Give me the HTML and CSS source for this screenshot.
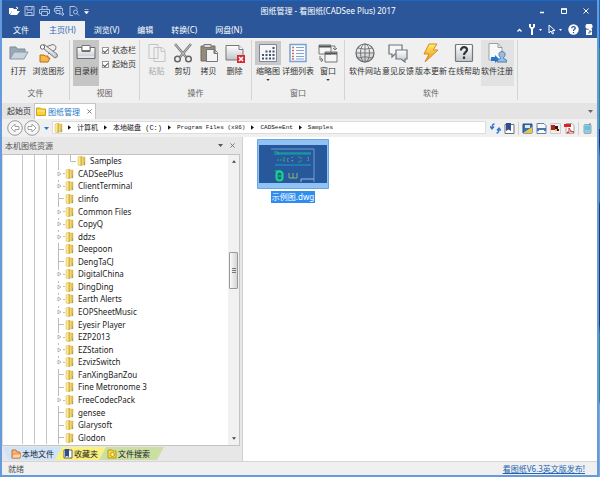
FILE: index.html
```html
<!DOCTYPE html>
<html lang="zh-CN">
<head>
<meta charset="utf-8">
<title>图纸管理 - 看图纸(CADSee Plus) 2017</title>
<link rel="stylesheet" href="styles.css">
</head>
<body>
<svg class="sprite" aria-hidden="true">
  <defs>
    <linearGradient id="metal" x2="0" y2="1"><stop stop-color="#fff"/><stop offset="1" stop-color="#bfc4cb"/></linearGradient>
    <linearGradient id="gold" x2="1" y2="0"><stop stop-color="#f9eeab"/><stop offset="1" stop-color="#dcae35"/></linearGradient>
    <linearGradient id="bolt" x2="0" y2="1"><stop stop-color="#fff06a"/><stop offset="1" stop-color="#f28a10"/></linearGradient>
  </defs>
  <symbol id="folder" viewBox="0 0 9 10"><path d="M1 1l3-1v10l-3-1z" fill="#fae78f" stroke="#d9b84d" stroke-width=".5"/><path d="M4 1h4v8H4z" fill="url(#gold)" stroke="#d8b64c" stroke-width=".5"/><path d="M4.400 0v10" stroke="#c89b2e" stroke-width=".7"/><path d="M7 6h1v3H7z" fill="#87ad8b"/></symbol>
  <symbol id="expand" viewBox="0 0 5 6"><path d="M1 1l3 2-3 2z" fill="#fff" stroke="#999" stroke-width=".7"/></symbol>
  <symbol id="down" viewBox="0 0 5 3"><path d="M0 0h5L2.500 3z" fill="currentColor"/></symbol>
  <symbol id="right" viewBox="0 0 4 6"><path d="M0 0l4 3-4 3z" fill="#111"/></symbol>
  <symbol id="close" viewBox="0 0 6 6"><path d="M.5.5l5 5m0-5l-5 5" fill="none" stroke="currentColor"/></symbol>
</svg>
<div class="window">
  <header class="titlebar">
    <div class="quick">
      <button aria-label="打开"><svg viewBox="0 0 11 10"><path d="M0 2h4l1 1h3v2H3L1 8H0z" fill="#fff"/><path d="M3 5h8L8 9H1z" fill="#fff"/><path d="M7 1l2 1-1 1" fill="none" stroke="#fff"/></svg></button>
      <button aria-label="保存"><svg viewBox="0 0 11 10"><path d="M1 .5h9v9H1zM3 .5V4h5V.5M3 9.500V6.500h5v3" fill="none" stroke="#a9c0e2"/></svg></button>
      <button aria-label="打印"><svg viewBox="0 0 11 10"><path d="M3 3V.5h5V3M2.500 7.500h-2v-4h10v4h-2M2.500 5.500h6v4h-6z" fill="none" stroke="#a9c0e2"/></svg></button>
      <button aria-label="批量打印"><svg viewBox="0 0 11 10"><path d="M2 2V.5h5V2M1.500 5.500h-1v-3h8v3M2 4.500h4v3H2zM5 8h5M8 6l2 2-2 2" fill="none" stroke="#a9c0e2"/></svg></button>
      <button aria-label="打印预览"><svg viewBox="0 0 11 10"><path d="M4 9.500H1v-9h5l2 2v1" fill="none" stroke="#a9c0e2"/><circle cx="6.500" cy="6" r="2" fill="none" stroke="#a9c0e2"/><path d="M8 7.500L10 9.500" stroke="#a9c0e2"/></svg></button>
      <button class="more" aria-label="更多"><svg viewBox="0 0 5 5"><path d="M.5.5h4M.5 2.500h4L2.500 5z" fill="#fff" stroke="#fff" stroke-width=".5"/></svg></button>
    </div>
    <h1>图纸管理 - 看图纸(CADSee Plus) 2017</h1>
    <div class="sys">
      <button aria-label="最小化"><svg viewBox="0 0 6 6"><path d="M1 4.500h4" stroke="#fff" stroke-width="1.500"/></svg></button>
      <button aria-label="最大化"><svg viewBox="0 0 6 6"><path d="M.5 1h5v4.500h-5z" fill="none" stroke="#fff"/><path d="M0 1h6" stroke="#fff" stroke-width="1.500"/></svg></button>
      <button aria-label="关闭"><svg><use href="#close"/></svg></button>
    </div>
  </header>
  <nav class="menu">
    <button>文件</button><button class="current">主页(H)</button><button>浏览(V)</button><button>编辑</button><button>转换(C)</button><button>网盘(N)</button>
    <div class="tools">
      <button aria-label="折叠"><svg class="w5" viewBox="0 0 5 4"><path d="M.5 3.500l2-2 2 2" fill="none" stroke="#fff" stroke-width="1.300"/></svg></button>
      <button class="pair" aria-label="设置"><svg class="w8" viewBox="0 0 8 11"><path d="M1 0v3l2 2v6h2V5l2-2V0H5v3H3V0z" fill="#fff"/></svg><svg class="w3"><use href="#down"/></svg></button>
      <button class="pair" aria-label="选择"><svg class="w8" viewBox="0 0 8 11"><path d="M1 1v8l2-2 1.500 3 1-.5L4.500 6.500H7z" fill="none" stroke="#fff"/></svg><svg class="w3"><use href="#down"/></svg></button>
      <button aria-label="帮助"><svg class="w11" viewBox="0 0 11 11"><circle cx="5.500" cy="5.500" r="5.200" fill="#fff"/><path d="M3.700 4.300c0-2.500 3.800-2.200 3.500 0C7 5.500 5.500 5.300 5.500 7M5.500 8v1.200" fill="none" stroke="#2b579a" stroke-width="1.300"/></svg></button>
      <button aria-label="账户"><svg class="w8" viewBox="0 0 8 11"><path d="M1.500 0h5l1 1.500v2L6 5h1v6H1V5h1L.5 3.500v-2z" fill="#fff"/><path d="M1 5.300h3M4 7h2v1H4v2" fill="none" stroke="#2b579a" stroke-width=".8"/></svg></button>
    </div>
  </nav>
  <section class="ribbon">
    <div class="group g-file">
      <div class="items">
        <button class="cmd"><svg viewBox="0 0 20 20"><path d="M1 4h6l1 2h8v4H6l-5 6z" fill="#9aa8b7" stroke="#7d8b9b"/><path d="M5 9h14l-4 7H1z" fill="#c8d3de" stroke="#8998a8"/></svg>打开</button>
        <button class="cmd"><svg viewBox="0 0 20 20"><path d="M3 5l11-3.500q4 1 2.500 5L9 11" fill="#eee" stroke="#777"/><path d="M2 3.500l3-2L18 11q2 3-2 4z" fill="url(#metal)" stroke="#777"/><circle cx="3.500" cy="4" r="2.200" fill="#fff" stroke="#666"/><path d="M1 12h4l1 1h3v2h2l-2 4H1z" fill="#f8b74d" stroke="#b66f12"/></svg>浏览图形</button>
      </div>
      <h2>文件</h2>
    </div>
    <div class="group g-view">
      <div class="items">
        <button class="cmd pressed"><svg viewBox="0 0 20 20"><path d="M1 4.500h5v4h8v-4h5v11H1z" fill="url(#metal)" stroke="#6d6d6d"/><path d="M6 2.500h8v5H6z" fill="#fff" stroke="#777"/><path d="M2 14h16" stroke="#fff"/></svg>目录树</button>
        <div class="checks"><label><input type="checkbox" checked>状态栏</label><label><input type="checkbox" checked>起始页</label></div>
      </div>
      <h2>视图</h2>
    </div>
    <div class="group g-edit">
      <div class="items">
        <button class="cmd" disabled><svg viewBox="0 0 20 20"><path d="M2 1.500h9v14H2zM7 4.500h8l3 3V18.500H7zM14 4.500v4h4" fill="#f1f1f1" stroke="#c3c3c3"/></svg>粘贴</button>
        <button class="cmd"><svg viewBox="0 0 20 20"><path d="M2 1l11 13M18 1L7 14" stroke="#777" stroke-width="2.500"/><path d="M2 1l11 13M18 1L7 14" stroke="#ddd" stroke-width=".8"/><circle cx="4.500" cy="16" r="2.800" fill="none" stroke="#666" stroke-width="1.500"/><circle cx="15.500" cy="16" r="2.800" fill="none" stroke="#666" stroke-width="1.500"/></svg>剪切</button>
        <button class="cmd"><svg viewBox="0 0 20 20"><path d="M2 3h14v15H2z" fill="#948b7b" stroke="#756b5c"/><path d="M5 1.500h7v3H5z" fill="#ddd" stroke="#777"/><path d="M7.500 6.500h8l3 3v9h-11zM15 6.500v4h3.500" fill="#f4f4f4" stroke="#777"/></svg>拷贝</button>
        <button class="cmd"><svg viewBox="0 0 20 20"><path d="M1 2.500h13l4 4V17H1z" fill="url(#metal)" stroke="#777"/><path d="M14 2.500v4h4" fill="#fff" stroke="#777"/><path d="M12 12h8v8h-8z" fill="#d62b32"/><path d="M14 14l4 4m0-4l-4 4" stroke="#fff" stroke-width="1.500"/></svg>删除</button>
      </div>
      <h2>操作</h2>
    </div>
    <div class="group g-win">
      <div class="items">
        <button class="cmd thumbs"><svg viewBox="0 0 20 20"><path d="M1.500 1.500h17v17h-17z" fill="#f5f7fa" stroke="#7e8996"/><g fill="none" stroke="#465366" stroke-width="2" stroke-dasharray="2 1.500"><path d="M14.500 5h2M7.500 8.500h9M4 12h13M4 15.500h13"/></g></svg>缩略图<svg class="caret"><use href="#down"/></svg></button>
        <button class="cmd"><svg viewBox="0 0 20 20"><path d="M2 1.500h16v17H2z" fill="#f7fbff" stroke="#7ba1cf" stroke-width="1.500"/><path d="M8 4.500h8M8 7.500h8M8 10.500h8M8 13.500h8M8 16h8" stroke="#86a5c8"/><path d="M4 4.500h2M4 7.500h2M4 10.500h2M4 13.500h2M4 16h2" stroke="#cf6f57" stroke-width="1.500"/></svg>详细列表</button>
        <button class="cmd"><svg viewBox="0 0 20 20"><path d="M1 2h12v9H1zM7 9h12v10H7z" fill="#f5f5f5" stroke="#777"/><path d="M1 3.500h12M7 10.500h12" stroke="#555" stroke-width="2"/><path d="M14 3h3v4m-2-2l2 2 2-2M2 13v4h3m-2-2l2 2-2 2" fill="none" stroke="#777"/></svg>窗口<svg class="caret"><use href="#down"/></svg></button>
      </div>
      <h2>窗口</h2>
    </div>
    <div class="group g-soft">
      <div class="items">
        <button class="cmd"><svg viewBox="0 0 20 20"><circle cx="10" cy="10" r="9" fill="url(#metal)" stroke="#666" stroke-width="1.200"/><ellipse cx="10" cy="10" rx="4.500" ry="9" fill="none" stroke="#777"/><path d="M10 1v18M1 10h18M3 5q7 2.500 14 0M3 15q7-2.500 14 0" fill="none" stroke="#777"/></svg>软件网站</button>
        <button class="cmd"><svg viewBox="0 0 20 20"><path d="M1 2h13v9H7l-3 3v-3H1z" fill="#f6f6f6" stroke="#6d747d" stroke-width="1.200"/><path d="M8 7h11v9h-2v3l-4-3H8z" fill="url(#metal)" stroke="#6d747d" stroke-width="1.200"/></svg>意见反馈</button>
        <button class="cmd"><svg viewBox="0 0 20 20"><path d="M8 1h8l-4 6h5L4 19l4-8H3z" fill="url(#bolt)" stroke="#d78a20"/></svg>版本更新</button>
        <button class="cmd"><svg viewBox="0 0 20 20"><rect x="1.500" y="1.500" width="17" height="17" rx="1" fill="url(#metal)" stroke="#777" stroke-width="1.200"/><path d="M7 7.500c0-5 6.500-4 6-.5-.3 2-3 2.500-3 5M10 13.500v2.500" fill="none" stroke="#333" stroke-width="2.200"/></svg>在线帮助</button>
        <button class="cmd register"><svg viewBox="0 0 20 20"><path d="M2 .5h9l4 4V17H2z" fill="#f8f8f8" stroke="#a1a1a1"/><path d="M11 .5v4h4" fill="none" stroke="#999"/><path d="M10 19q0-3 3.500-3.500v-1q-2-1.500-1.500-4 1-2 3-2t3 2q.5 2.500-1.500 4v1Q20 16 20 19z" fill="#9abce2" stroke="#517dad"/><path d="M4 14h4v-2l4 4-4 4v-2H4z" fill="#2679c8"/></svg>软件注册</button>
      </div>
      <h2>软件</h2>
    </div>
  </section>
  <div class="doctabs">
    <button class="tab">起始页</button>
    <button class="tab active"><svg class="docicon" viewBox="0 0 10 9"><path d="M.5 1h4l1 1h4v6.500h-9z" fill="#f9d13d" stroke="#d49d17"/><path d="M1 4h8" stroke="#fff1a1"/></svg>图纸管理<svg class="x"><use href="#close"/></svg></button>
    <button class="list" aria-label="标签列表"><svg><use href="#down"/></svg></button>
  </div>
  <div class="address">
    <button aria-label="后退"><svg class="nav" viewBox="0 0 16 16"><circle cx="8" cy="8" r="7.300" fill="#f6f6f6" stroke="#999"/><path d="M8 4L4 8l4 4V9.500h4v-3H8z" fill="#fff" stroke="#a2a2a2"/></svg></button>
    <button aria-label="前进"><svg class="nav" viewBox="0 0 16 16"><circle cx="8" cy="8" r="7.300" fill="#f6f6f6" stroke="#999"/><path d="M8 4l4 4-4 4V9.500H4v-3h4z" fill="#fff" stroke="#a2a2a2"/></svg></button>
    <button class="history" aria-label="历史"><svg><use href="#down"/></svg></button>
    <div class="path">
      <svg class="folder"><use href="#folder"/></svg>
      <svg class="sep"><use href="#right"/></svg><button>计算机</button>
      <svg class="sep"><use href="#right"/></svg><button>本地磁盘 (C:)</button>
      <svg class="sep"><use href="#right"/></svg><button>Program Files (x86)</button>
      <svg class="sep"><use href="#right"/></svg><button>CADSeeEnt</button>
      <svg class="sep"><use href="#right"/></svg><button>Samples</button>
    </div>
    <div class="actions">
      <button aria-label="刷新"><svg viewBox="0 0 11 11"><path d="M4.500 1Q2 1 2 5M0 3.500L2 6l2-2.500M6.500 10Q9 10 9 6M7 7.500L9 5l2 2.500" fill="none" stroke="#2e79ca" stroke-width="1.400"/></svg></button>
      <button aria-label="收藏"><svg viewBox="0 0 11 11"><path d="M1 1.500h9v9H1z" fill="#fff" stroke="#6d7078"/><path d="M2 0h5v8L4.500 6.500 2 8z" fill="#314f8c"/></svg></button>
      <i></i>
      <button aria-label="图像"><svg viewBox="0 0 11 11"><path d="M1 1h9v9H1z" fill="#346fb8" stroke="#254f87"/><path d="M1 10l9-6v6z" fill="#f2c63b"/><path d="M3 2h5v3H3z" fill="#dce8f5"/></svg></button>
      <button aria-label="打印"><svg viewBox="0 0 11 11"><path d="M1 .5h7l2 2v8H1z" fill="#f4f9ff" stroke="#68829f"/><path d="M1 5h9v3H1z" fill="#4f76a2"/><path d="M3 7h5v3H3z" fill="#fff"/></svg></button>
      <button aria-label="转换"><svg viewBox="0 0 11 11"><path d="M.5.5h10v10H.5z" fill="#eee" stroke="#ccc"/><path d="M1 2h4v5H1z" fill="#ad2520"/><path d="M5 3h3v4H5z" fill="#41130f"/><path d="M5 6h4v2H5z" fill="#f4b728"/><path d="M7 6h2v2H7z" fill="#41130f"/></svg></button>
      <button aria-label="导出 PDF"><svg viewBox="0 0 11 11"><path d="M2 .5h6l2 2v8H2z" fill="#fff" stroke="#aaa"/><path d="M0 1h7v3H0z" fill="#d9251d"/><path d="M3 10q3-3 2-5 1 4 5 4-4-1-7 1" fill="none" stroke="#d43737"/></svg></button>
      <i></i>
      <button aria-label="手机"><svg viewBox="0 0 11 11"><rect x="2" y="1.500" width="7" height="9" rx="1" fill="#a6c3cf" stroke="#8fabb6"/><path d="M3 3h5v4H3z" fill="#52c8eb"/><path d="M8 0v2" stroke="#777"/></svg></button>
    </div>
  </div>
  <main>
    <aside>
      <div class="panelhead"><h2>本机图纸资源</h2><button aria-label="菜单"><svg><use href="#down"/></svg></button><button aria-label="关闭面板"><svg class="x"><use href="#close"/></svg></button></div>
      <div class="treebox">
        <ul class="tree">
          <li><b></b><b></b><b></b><b></b><b class="leaf end"></b><svg class="folder"><use href="#folder"/></svg>Samples</li>
          <li><b></b><b></b><b></b><b class="open"><svg><use href="#expand"/></svg></b><svg class="folder"><use href="#folder"/></svg>CADSeePlus</li>
          <li><b></b><b></b><b></b><b class="open"><svg><use href="#expand"/></svg></b><svg class="folder"><use href="#folder"/></svg>ClientTerminal</li>
          <li><b></b><b></b><b></b><b class="leaf"></b><svg class="folder"><use href="#folder"/></svg>clinfo</li>
          <li><b></b><b></b><b></b><b class="open"><svg><use href="#expand"/></svg></b><svg class="folder"><use href="#folder"/></svg>Common Files</li>
          <li><b></b><b></b><b></b><b class="open"><svg><use href="#expand"/></svg></b><svg class="folder"><use href="#folder"/></svg>CopyQ</li>
          <li><b></b><b></b><b></b><b class="open"><svg><use href="#expand"/></svg></b><svg class="folder"><use href="#folder"/></svg>ddzs</li>
          <li><b></b><b></b><b></b><b class="leaf"></b><svg class="folder"><use href="#folder"/></svg>Deepoon</li>
          <li><b></b><b></b><b></b><b class="leaf"></b><svg class="folder"><use href="#folder"/></svg>DengTaCJ</li>
          <li><b></b><b></b><b></b><b class="open"><svg><use href="#expand"/></svg></b><svg class="folder"><use href="#folder"/></svg>DigitalChina</li>
          <li><b></b><b></b><b></b><b class="open"><svg><use href="#expand"/></svg></b><svg class="folder"><use href="#folder"/></svg>DingDing</li>
          <li><b></b><b></b><b></b><b class="open"><svg><use href="#expand"/></svg></b><svg class="folder"><use href="#folder"/></svg>Earth Alerts</li>
          <li><b></b><b></b><b></b><b class="open"><svg><use href="#expand"/></svg></b><svg class="folder"><use href="#folder"/></svg>EOPSheetMusic</li>
          <li><b></b><b></b><b></b><b class="leaf"></b><svg class="folder"><use href="#folder"/></svg>Eyesir Player</li>
          <li><b></b><b></b><b></b><b class="open"><svg><use href="#expand"/></svg></b><svg class="folder"><use href="#folder"/></svg>EZP2013</li>
          <li><b></b><b></b><b></b><b class="open"><svg><use href="#expand"/></svg></b><svg class="folder"><use href="#folder"/></svg>EZStation</li>
          <li><b></b><b></b><b></b><b class="open"><svg><use href="#expand"/></svg></b><svg class="folder"><use href="#folder"/></svg>EzvizSwitch</li>
          <li><b></b><b></b><b></b><b class="leaf"></b><svg class="folder"><use href="#folder"/></svg>FanXingBanZou</li>
          <li><b></b><b></b><b></b><b class="leaf"></b><svg class="folder"><use href="#folder"/></svg>Fine Metronome 3</li>
          <li><b></b><b></b><b></b><b class="open"><svg><use href="#expand"/></svg></b><svg class="folder"><use href="#folder"/></svg>FreeCodecPack</li>
          <li><b></b><b></b><b></b><b class="leaf"></b><svg class="folder"><use href="#folder"/></svg>gensee</li>
          <li><b></b><b></b><b></b><b class="leaf"></b><svg class="folder"><use href="#folder"/></svg>Glarysoft</li>
          <li><b></b><b></b><b></b><b class="leaf"></b><svg class="folder"><use href="#folder"/></svg>Glodon</li>
        </ul>
        <div class="scroll"><svg class="up"><use href="#down"/></svg><span class="before"></span><span class="thumb"></span><span class="after"></span><svg><use href="#down"/></svg></div>
      </div>
      <div class="sidetabs">
        <button class="local"><svg viewBox="0 0 10 10"><path d="M1 1h4l1 2h3v6H1z" fill="#f6b774" stroke="#d1712b"/><path d="M2 5h8L9 9H1z" fill="#ffd5a5" stroke="#d1712b" stroke-width=".6"/></svg>本地文件</button>
        <button class="fav"><svg viewBox="0 0 10 10"><path d="M1 1h8v8H1z" fill="#fff" stroke="#5e6270"/><path d="M2 0h4v8L4 7 2 8z" fill="#314f8c"/></svg>收藏夹</button>
        <button class="find"><svg viewBox="0 0 10 10"><path d="M1 1h4l1 1h3v7H1z" fill="#f4dc43" stroke="#b99719"/><circle cx="5.500" cy="5.500" r="2" fill="#fff1a0" stroke="#b99719"/></svg>文件搜索</button>
      </div>
    </aside>
    <section class="files">
      <figure>
        <svg class="preview" viewBox="0 0 72 50"><path d="M.5.5h71v49H.5z" fill="#91c2f4" stroke="#69a6e3"/><path d="M2 6h68v38H2z" fill="#28589c"/><path d="M14 10h43v33" fill="none" stroke="#6f9bd0"/><path d="M44 43v-3h13" fill="none" stroke="#8ebae9"/><g fill="none"><path d="M17 13h4v3M20 14h34" stroke="#18ba70"/><path d="M17 15h37M18 26h36" stroke="#169cce" stroke-width="1.200"/><path d="M20 21h8M27 18v6M41 18h3v5h-3" stroke="#28a673" stroke-dasharray="2 1"/><path d="M31 19v5M35 18v6M51 18v6" stroke="#50c2b3" stroke-dasharray="1 2"/><rect x="19.500" y="32.500" width="6" height="9" rx="3" stroke="#10dc84" stroke-width="2"/><path d="M18 32h6M21 37h4" stroke="#10dc84"/><path d="M32 34v5h4v-5M36 39h4v-5" stroke="#8ab677"/></g><path d="M30 21h1M35 22h1M51 20h1" stroke="#df7969"/></svg>
        <figcaption>示例图.dwg</figcaption>
      </figure>
    </section>
  </main>
  <footer><span>就绪</span><a href="#">看图纸V6.3英文版发布!</a></footer>
</div>
</body>
</html>
```
FILE: styles.css
```css
* { box-sizing: border-box; }
html { height: 100%; background: linear-gradient(#1769c5 0 10%, #28858c 10% 27%, #12306c 27% 30%, #4477b4 33% 42%, #123a78 43% 68%, #28858c 70% 84%, #7fa9da 85%); }
body { height: 100%; margin: 0; padding-right: 1px; font: 8px/12px "Noto Sans", "Noto Sans CJK SC", sans-serif; color: #333; }
button { font: inherit; color: inherit; background: none; border: 0; padding: 0; display: flex; align-items: center; justify-content: center; white-space: nowrap; }
h1, h2, figure, ul { margin: 0; padding: 0; font-size: inherit; font-weight: 400; }
svg { display: block; flex: none; }
.sprite { position: absolute; width: 0; height: 0; }
.window { height: 100%; display: flex; flex-direction: column; background: #f0f0f0; border: solid #659bdd; border-width: 0 2px 2px 2px; }
.titlebar, .menu { background: #2b579a; color: #fff; flex: none; display: flex; }
.titlebar { height: 21px; align-items: center; border-top: 1px solid #1768c4; display: grid; grid-template-columns: 1fr auto 1fr; }
.titlebar h1 { padding-left: 57px; }
.quick { display: flex; gap: 4px; padding-left: 7px; align-items: center; }
.quick svg { width: 11px; height: 10px; }
.quick .more svg { width: 5px; height: 5px; }
.sys { display: flex; justify-content: flex-end; gap: 16px; padding-right: 8px; }
.sys svg { width: 6px; height: 6px; }
.menu { height: 17px; }
.menu > button { padding: 0 9px; }
.menu > button:first-child { padding: 0 11px; }
.menu > .current { background: #f0f0f0; color: #2b69b8; }
.tools { margin-left: auto; display: flex; align-items: center; gap: 6px; padding-right: 4px; }
.tools .pair { gap: 3px; }
.w3 { width: 3px; height: 2px; }
.w5 { width: 5px; height: 4px; }
.w8 { width: 8px; height: 11px; }
.w11 { width: 11px; height: 11px; }

.ribbon { flex: none; height: 65px; display: flex; padding: 2px 0 3px; }
.group { display: flex; flex-direction: column; border-right: 1px solid #d4d4d4; }
.group h2 { text-align: center; color: #666; }
.items { display: flex; height: 47px; justify-content: center; }
.g-file { width: 68px; }
.g-view { width: 70px; }
.g-edit { width: 112px; }
.g-win { width: 93px; }
.g-soft { width: 173px; }
.cmd { flex-direction: column; justify-content: flex-start; min-width: 26px; height: 46px; padding-top: 3px; }
.cmd > svg { width: 20px; height: 20px; margin-bottom: 2px; }
.cmd > .caret { width: 4px; height: 2px; margin-top: 2px; }
.g-file .cmd:last-child { width: 34px; }
.g-win .cmd { width: 30px; }
.g-soft .cmd { width: 33px; }
.cmd:disabled { color: #aaa; }
.pressed { background: #c5c5c5; }
.register { background: #e2e2e2; }
.thumbs > svg:first-child { background: #c8c8c8; width: 26px; height: 24px; padding: 2px 3px; margin: -2px 0 0; }
.checks { padding: 3px 0 0 3px; }
.checks label { display: flex; align-items: center; gap: 3px; height: 14px; white-space: nowrap; }
input { appearance: none; width: 7px; height: 7px; margin: 0; border: 1px solid #999; background: #fff; display: grid; place-items: center; }
input:checked::after { content: ""; width: 4px; height: 2px; border: solid #555; border-width: 0 0 1px 1px; transform: rotate(-45deg); }

.doctabs { flex: none; height: 16px; display: flex; background: #e4e4e4; align-items: stretch; padding-left: 1px; }
.tab { padding: 0 3px 0 4px; }
.tab.active { background: #fff; border: 1px solid #c5c5c5; border-bottom: 0; color: #2878c8; gap: 2px; padding: 0 3px 0 1px; }
.docicon { width: 10px; height: 9px; }
.x { width: 5px; height: 5px; color: #666; }
.tab .x { margin: 0 0 0 5px; }
.list { margin-left: auto; padding-right: 4px; color: #666; }
.list svg { width: 5px; height: 3px; }
.address { flex: none; height: 18px; display: flex; align-items: center; gap: 1px; padding-left: 5px; }
.nav { width: 16px; height: 16px; }
.history { width: 10px; color: #2878c8; }
.history svg { width: 5px; height: 3px; }
.path { flex: 1; align-self: stretch; margin: 2px 0 3px; background: #fff; border: 1px solid #ddd; display: flex; align-items: center; font: 6px/12px "Liberation Mono", monospace; color: #111; }
.path button { margin: 0 6px; }
.path button:nth-of-type(-n+2) { font: 7px/12px "Liberation Mono", "Noto Sans CJK SC", monospace; }
.folder { width: 9px; height: 10px; }
.path .folder { margin: 0 5px 0 1px; }
.sep { width: 3px; height: 5px; }
.actions { display: flex; align-items: center; gap: 3px; padding: 0 4px 0 3px; }
.actions svg { width: 11px; height: 11px; }
.actions i { width: 1px; height: 13px; background: #d0d0d0; }

main { flex: 1; min-height: 0; display: flex; }
aside { width: 241px; flex: none; display: flex; flex-direction: column; background: #e7e7e7; border-right: 1px solid #d1d1d1; }
.panelhead { height: 17px; flex: none; display: flex; align-items: center; gap: 7px; padding: 0 5px 0 3px; color: #555; margin-right: 2px; }
.panelhead h2 { flex: 1; }
.panelhead button svg { width: 5px; height: 3px; }
.panelhead button .x { height: 5px; }
.treebox { flex: 1; min-height: 0; display: flex; background: #fff; border: 1px solid #c3c3c3; border-left-color: #ddd; margin-right: 2px; }
.tree { flex: 1; list-style: none; display: grid; grid-auto-rows: 1fr; padding: 0 0 1px 14px; color: #222; min-height: 0; }
.tree li { display: flex; align-items: center; min-height: 0; white-space: nowrap; }
.tree .folder { margin-right: 4px; }
.tree b { width: 12px; align-self: stretch; background: linear-gradient(#c6c6c6, #c6c6c6) 5px 0 / 1px 100% no-repeat; }
.tree .leaf { background: linear-gradient(#bbb, #bbb) 5px 0 / 1px 100% no-repeat, linear-gradient(#bbb, #bbb) 6px 50% / 5px 1px no-repeat; }
.tree .end { background-size: 1px 50%, 5px 1px; }
.tree .open { display: flex; align-items: center; padding-left: 4px; background: linear-gradient(#bbb, #bbb) 5px 0 / 1px 2px no-repeat, linear-gradient(#bbb, #bbb) 10px 50% / 2px 1px no-repeat; }
.tree b svg { width: 5px; height: 6px; }
.scroll { width: 11px; flex: none; background: #f1f1f1; display: flex; flex-direction: column; align-items: center; padding: 5px 0; color: #444; }
.scroll > svg { width: 4px; height: 3px; }
.up { transform: rotate(180deg); }
.before { flex: 89; }
.thumb { flex: 35; width: 9px; border: 1px solid #999; border-radius: 1px; background: linear-gradient(#777, #777) 50% calc(50% - 2px) / 4px 1px no-repeat, linear-gradient(#777, #777) center / 4px 1px no-repeat, linear-gradient(#777, #777) 50% calc(50% + 2px) / 4px 1px no-repeat, linear-gradient(90deg, #fafafa, #d5d5d5); }
.after { flex: 149; }
.sidetabs { flex: none; height: 15px; padding: 1px 0 1px 1px; display: flex; color: #222; }
.sidetabs button { padding: 0 8px; margin-right: -7px; gap: 1px; clip-path: polygon(7px 0, 100% 0, calc(100% - 7px) 100%, 0 100%); }
.sidetabs svg { width: 10px; height: 10px; }
.sidetabs .local { background: #cfe3fb; clip-path: polygon(0 0, 100% 0, calc(100% - 7px) 100%, 5px 100%); }
.sidetabs .fav { background: #fbf17e; }
.sidetabs .find { background: #cbdfa5; padding-right: 14px; }
.files { flex: 1; background: #fff; padding: 2px 14px; }
figure { width: 72px; display: flex; flex-direction: column; align-items: center; gap: 2px; }
.preview { width: 72px; height: 50px; }
figcaption { background: #2f8df1; color: #fff; padding: 0 1px; white-space: nowrap; }
footer { flex: none; height: 14px; border-top: 1px solid #d5d5d5; display: flex; justify-content: space-between; align-items: center; padding: 0 12px 0 6px; color: #555; }
a { color: #2465b5; }
```
